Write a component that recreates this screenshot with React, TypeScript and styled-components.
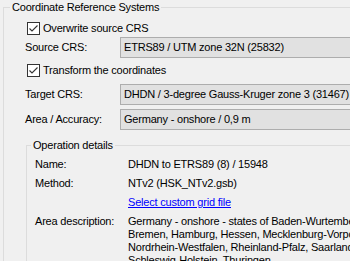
import styled, { createGlobalStyle } from "styled-components";

const GlobalStyle = createGlobalStyle`
  html, body {
    margin: 0;
    padding: 0;
    background: #f0f0f0;
  }
  body {
    font-family: "Liberation Sans", Arial, sans-serif;
    font-size: 11px;
    line-height: 13px;
    letter-spacing: -0.2px;
    color: #000;
  }
`;

const Window = styled.div`
  width: 350px;
  height: 261px;
  overflow: hidden;
  background: #f0f0f0;
`;

const Group = styled.fieldset<{ $left: number; $top: number }>`
  margin: ${(p) => p.$top}px 0 0 ${(p) => p.$left}px;
  padding: 0;
  width: 460px;
  min-width: 0;
  border: 1px solid #dcdcdc;
`;

const Legend = styled.legend<{ $indent: number }>`
  margin-left: ${(p) => p.$indent}px;
  padding: 0 2px;
  line-height: 13px;
`;

const Body = styled.div`
  display: flex;
  flex-direction: column;
  padding: 6px 0 12px 21px;
`;

const CheckRow = styled.label<{ $gap?: number }>`
  display: flex;
  align-items: center;
  gap: 3px;
  height: 17px;
  margin: ${(p) => p.$gap ?? 0}px 0 0 2px;
  white-space: nowrap;
`;

const Box = styled.svg`
  flex: none;
  display: block;
`;

const FieldRow = styled.div<{ $gap?: number }>`
  display: grid;
  grid-template-columns: 95px 1fr;
  align-items: center;
  height: 21px;
  margin-top: ${(p) => p.$gap ?? 0}px;
  white-space: nowrap;
`;

const Combo = styled.div`
  box-sizing: border-box;
  height: 21px;
  display: flex;
  align-items: center;
  padding-left: 3px;
  border: 1px solid #adadad;
  background: #e1e1e1;
`;

const Details = styled.div`
  display: grid;
  grid-template-columns: 93px 1fr;
  row-gap: 6px;
  padding: 6px 0 10px 8px;
  white-space: nowrap;
`;

const Link = styled.a`
  color: #0000ff;
  text-decoration: underline;
  cursor: pointer;
`;

const Lines = styled.div`
  display: flex;
  flex-direction: column;
`;

const Check = ({ label, gap }: { label: string; gap?: number }) => (
  <CheckRow $gap={gap}>
    <Box width="13" height="13" viewBox="0 0 13 13">
      <rect x="0.5" y="0.5" width="12" height="12" fill="#fff" stroke="#333" />
      <path d="M2.5 6.5 L5 9 L10.5 3.5" fill="none" stroke="#333" strokeWidth="1.1" />
    </Box>
    {label}
  </CheckRow>
);

const area = [
  "Germany - onshore - states of Baden-Wurtemberg, Bayern, Berlin, Brandenburg,",
  "Bremen, Hamburg, Hessen, Mecklenburg-Vorpommern, Niedersachsen,",
  "Nordrhein-Westfalen, Rheinland-Pfalz, Saarland, Sachsen, Sachsen-Anhalt,",
  "Schleswig-Holstein, Thuringen.",
];

export default function App() {
  return (
    <Window>
      <GlobalStyle />
      <Group $left={3} $top={1}>
        <Legend $indent={6}>Coordinate Reference Systems</Legend>
        <Body>
          <Check label="Overwrite source CRS" />
          <FieldRow>
            <span>Source CRS:</span>
            <Combo>ETRS89 / UTM zone 32N (25832)</Combo>
          </FieldRow>
          <Check label="Transform the coordinates" gap={4} />
          <FieldRow $gap={5}>
            <span>Target CRS:</span>
            <Combo>DHDN / 3-degree Gauss-Kruger zone 3 (31467)</Combo>
          </FieldRow>
          <FieldRow $gap={4}>
            <span>Area / Accuracy:</span>
            <Combo>Germany - onshore / 0,9 m</Combo>
          </FieldRow>
          <Group $left={1} $top={9}>
            <Legend $indent={4}>Operation details</Legend>
            <Details>
              <span>Name:</span>
              <span>DHDN to ETRS89 (8) / 15948</span>
              <span>Method:</span>
              <span>NTv2 (HSK_NTv2.gsb)</span>
              <span />
              <Link>Select custom grid file</Link>
              <span>Area description:</span>
              <Lines>
                {area.map((l) => (
                  <span key={l}>{l}</span>
                ))}
              </Lines>
            </Details>
          </Group>
        </Body>
      </Group>
    </Window>
  );
}
